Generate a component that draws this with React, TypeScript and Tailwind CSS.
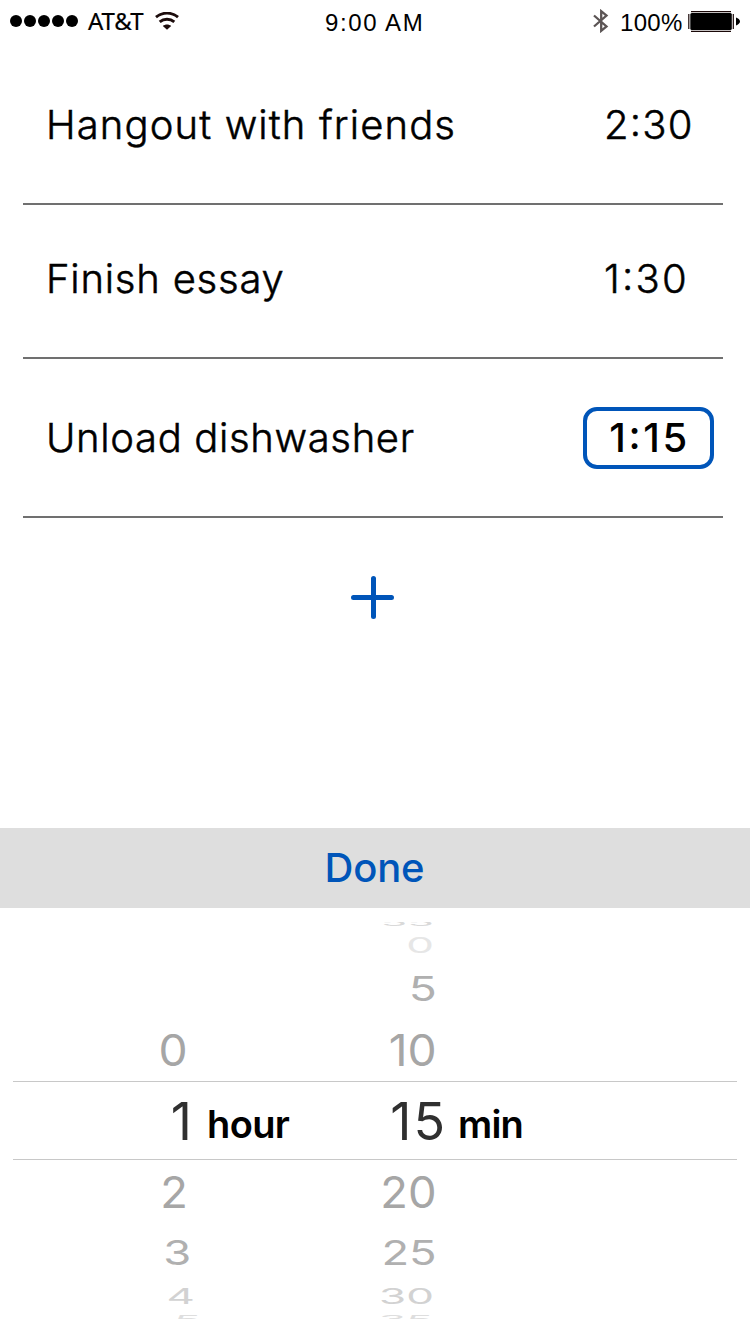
import React from "react";

type Task = { name: string; hours: string; minutes: string; row: string; nameStyle: string; timeStyle: string; selected?: boolean };

const tasks: Task[] = [
  { name: "Hangout with friends", hours: "2", minutes: "30", row: "h-[159px]", nameStyle: "tracking-[1.12px]", timeStyle: "w-[119px] tracking-[1.2px]" },
  { name: "Finish essay", hours: "1", minutes: "30", row: "h-[154px] pb-1", nameStyle: "tracking-[0.78px]", timeStyle: "w-[119px] tracking-[2.2px]" },
  { name: "Unload dishwasher", hours: "1", minutes: "15", row: "h-[159px]", nameStyle: "tracking-[0.65px]", timeStyle: "", selected: true },
];

function Duration({ hours, minutes }: { hours: string; minutes: string }) {
  return (
    <>
      {hours}
      <span className="inline-block -translate-y-[3.5px]">:</span>
      {minutes}
    </>
  );
}

type WheelRow = { hour: string; minute: string; row: string; hourCell: string; minuteCell: string; glyph: string };

const above: WheelRow[] = [
  { hour: "", minute: "55", row: "h-6 pt-[14px]", hourCell: "w-[188px]", minuteCell: "w-[246px] h-[5px] items-end overflow-hidden text-[#d9d9d9]", glyph: "h-[10px] scale-y-[0.25]" },
  { hour: "", minute: "0", row: "h-[26px] items-center", hourCell: "w-[188px]", minuteCell: "w-[246px] text-[#e6e6e6]", glyph: "scale-y-50" },
  { hour: "", minute: "5", row: "h-[61px] items-center", hourCell: "w-[188px]", minuteCell: "w-[249px] text-[#b0b0b0]", glyph: "origin-right scale-x-105 scale-y-[0.78]" },
  { hour: "0", minute: "10", row: "h-[62px] items-center", hourCell: "w-[188px] text-[#a6a6a6]", minuteCell: "w-[249px] text-[#a6a6a6]", glyph: "origin-right scale-x-105" },
];

const below: WheelRow[] = [
  { hour: "2", minute: "20", row: "h-[63px] items-center", hourCell: "w-[188px] text-[#a6a6a6]", minuteCell: "w-[249px] text-[#a6a6a6]", glyph: "origin-right scale-x-[1.03]" },
  { hour: "3", minute: "25", row: "h-[59px] items-center", hourCell: "w-[191px] text-[#b0b0b0]", minuteCell: "w-[246px] text-[#b0b0b0]", glyph: "origin-right scale-x-[1.03] scale-y-[0.78]" },
  { hour: "4", minute: "30", row: "h-[27px] items-center", hourCell: "w-[195px] text-[#d2d2d2]", minuteCell: "w-[239px] text-[#d2d2d2]", glyph: "scale-y-50" },
  { hour: "5", minute: "35", row: "h-[25px] pt-[5px]", hourCell: "w-[201px] h-[5px] overflow-hidden text-[#dedede]", minuteCell: "w-[232px] h-[5px] overflow-hidden text-[#dedede]", glyph: "h-[10px] scale-y-[0.25]" },
];

function WheelLine({ item }: { item: WheelRow }) {
  return (
    <div className={`flex ${item.row} text-[44px] leading-none`}>
      <div className={`flex shrink-0 justify-end ${item.hourCell}`}>
        <span className={`flex items-center ${item.glyph}`}>{item.hour}</span>
      </div>
      <div className={`flex shrink-0 justify-end ${item.minuteCell}`}>
        <span className={`flex items-center ${item.glyph}`}>{item.minute}</span>
      </div>
    </div>
  );
}

function StatusBar() {
  return (
    <header className="grid h-[44px] grid-cols-[325px_1fr_160px] text-2xl leading-[44px] text-black">
      <div className="flex pl-2.5">
        <svg className="mt-[15px] h-3 w-[68px]" viewBox="0 0 68 12" aria-hidden="true">
          {[6, 20, 34, 48, 62].map((cx) => (
            <circle key={cx} cx={cx} cy="6" r="6" />
          ))}
        </svg>
        <span className="-mt-px ml-2.5 w-[67px] font-['Noto_Sans',sans-serif] tracking-[-0.1px] [-webkit-text-stroke:0.2px_#000]">AT&amp;T</span>
        <svg className="mt-3 h-[18px] w-6" viewBox="0 0 24 18" fill="none" stroke="#1c0c0c" aria-hidden="true">
          <path d="M1 5.200C7.500-.2 16.500-.2 23 5.200" strokeWidth="2.900" />
          <path d="M4.700 9.900c4.300-3.600 10.300-3.600 14.600 0" strokeWidth="2.900" />
          <path d="M7.800 13.900c2.400-2 6-2 8.400 0L12 17.800z" fill="#1c0c0c" stroke="none" />
        </svg>
      </div>
      <span className="mt-px font-['Liberation_Sans',sans-serif] tracking-[1.6px]">9:00 AM</span>
      <div className="flex">
        <svg className="mt-[9px] ml-[2px] h-6 w-[18px]" viewBox="0 0 18 24" fill="none" stroke="#5b5454" strokeWidth="2.300" aria-hidden="true">
          <path d="M2 6.500 14.500 17.500 9.200 21.800V2.200L14.500 6.500 2 17.500" />
        </svg>
        <span className="mt-px ml-[10px] w-[68px] font-['Liberation_Sans',sans-serif] tracking-[0.3px]">100%</span>
        <svg className="mt-[11px] h-[21px] w-[53px]" viewBox="0 0 53 21" aria-hidden="true">
          <path d="M3 .6h40M3 20.400h40M.8 3v15M45.300 3v15" fill="none" stroke="#1a0808" strokeWidth="1.200" />
          <rect x="2.300" y="2" width="41.500" height="17" rx="1.500" />
          <path d="M48 6.500c2.200.8 4 2.200 4 4s-1.800 3.200-4 4z" />
        </svg>
      </div>
    </header>
  );
}

export default function App() {
  return (
    <main className="flex h-[1334px] w-[750px] flex-col overflow-hidden bg-white font-['Inter',sans-serif] text-black">
      <StatusBar />
      <section className="mt-[2px] flex flex-col px-[23px] pr-[27px] text-[40px] leading-none font-light">
        {tasks.map((task) => (
          <div key={task.name} className={`flex items-center justify-between border-b-2 border-[#707070] pl-[23px] ${task.row}`}>
            <span className={`[-webkit-text-stroke:0.5px_#000] ${task.nameStyle}`}>{task.name}</span>
            {task.selected ? (
              <span className="mr-[9px] flex h-[62px] w-[131px] items-center justify-center rounded-[14px] border-4 border-[#0055b9] pl-[2px] font-medium tracking-[2.6px]">
                <Duration hours={task.hours} minutes={task.minutes} />
              </span>
            ) : (
              <span className={`[-webkit-text-stroke:0.5px_#000] ${task.timeStyle}`}>
                <Duration hours={task.hours} minutes={task.minutes} />
              </span>
            )}
          </div>
        ))}
      </section>
      <div className="flex h-[310px] justify-center pt-[58px] pr-[5px]">
        <button className="h-[43px] w-[43px]" aria-label="Add task">
          <svg viewBox="0 0 43 43" stroke="#0055b9" strokeWidth="5" strokeLinecap="round" aria-hidden="true">
            <path d="M22.500 2.500v38M2.500 21.500h38" />
          </svg>
        </button>
      </div>
      <button className="flex h-20 shrink-0 items-center justify-center bg-[#dedede] pr-px text-[40px] leading-none font-medium tracking-[-0.2px] text-[#0055b9]">
        Done
      </button>
      <section className="flex flex-col">
        {above.map((item) => (
          <WheelLine key={item.minute} item={item} />
        ))}
        <div className="mx-[13px] flex h-[79px] items-center border-y border-[#c8c8c8] text-[38px] leading-none font-semibold">
          <span className="w-[179px] pt-[2px] text-right text-[52px] font-normal text-[#303030]">1</span>
          <span className="mt-[7px] ml-[15px] w-[120px] tracking-[-0.6px]">hour</span>
          <span className="w-[118px] pt-[2px] text-right text-[52px] font-normal text-[#303030]">
            <span className="tracking-[2px]">1</span>5
          </span>
          <span className="mt-[7px] ml-[13px] tracking-[-0.8px]">min</span>
        </div>
        {below.map((item) => (
          <WheelLine key={item.minute} item={item} />
        ))}
      </section>
    </main>
  );
}
